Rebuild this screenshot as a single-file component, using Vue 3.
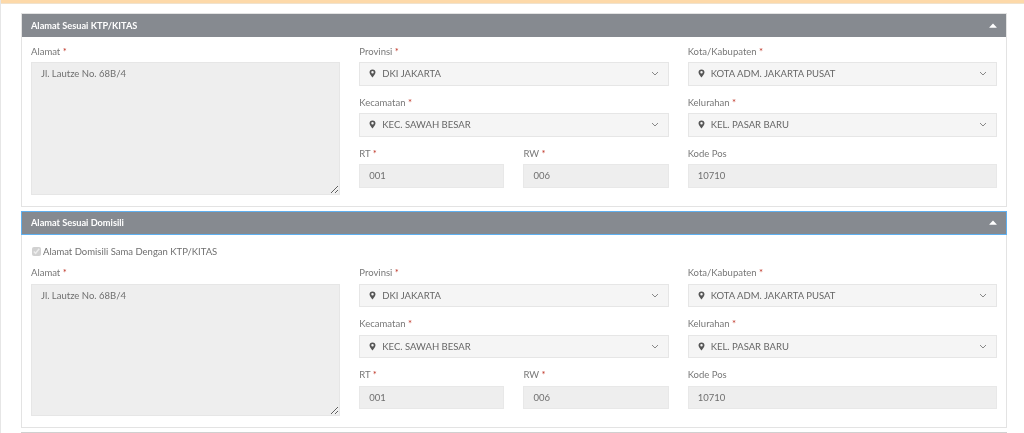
<script setup>
const panels = [
  { title: 'Alamat Sesuai KTP/KITAS', check: false },
  { title: 'Alamat Sesuai Domisili', check: true }
]
</script>

<template>
  <div class="page">
    <div class="topbar"></div>
    <div class="content">
      <section v-for="p in panels" :key="p.title" class="panel">
        <header class="head" :class="{ active: p.check }">
          <span>{{ p.title }}</span>
          <svg class="caret" width="8" height="5" viewBox="0 0 8 5"><path d="M4 .4 7.6 4.2Q7.8 4.8 7 4.8H1Q.2 4.8.4 4.2Z" fill="#fff"/></svg>
        </header>
        <div class="body" :class="{ hascheck: p.check }">
          <label v-if="p.check" class="check">
            <input type="checkbox" checked disabled />
            <span>Alamat Domisili Sama Dengan KTP/KITAS</span>
          </label>
          <div class="grid">
            <div class="field address">
              <div class="label">Alamat <i>*</i></div>
              <textarea class="area" disabled>Jl. Lautze No. 68B/4</textarea>
            </div>
            <div class="field" v-for="s in [['Provinsi','DKI JAKARTA'],['Kota/Kabupaten','KOTA ADM. JAKARTA PUSAT'],['Kecamatan','KEC. SAWAH BESAR'],['Kelurahan','KEL. PASAR BARU']]" :key="s[0]">
              <div class="label">{{ s[0] }} <i>*</i></div>
              <div class="select">
                <svg class="pin" width="7" height="9" viewBox="0 0 8 10"><path fill-rule="evenodd" d="M4 .3A3.4 3.4 0 0 0 .6 3.700C.6 5.900 4 9.700 4 9.700s3.400-3.800 3.400-6A3.400 3.400 0 0 0 4 .3Zm0 4.700a1.400 1.400 0 1 1 0-2.800a1.400 1.400 0 0 1 0 2.800Z" fill="#555"/></svg>
                <span class="val">{{ s[1] }}</span>
                <svg class="chev" width="8" height="5" viewBox="0 0 8 5"><path d="M1 1 4 4 7 1" fill="none" stroke="#888" stroke-width="1"/></svg>
              </div>
            </div>
            <div class="pair">
              <div class="field">
                <div class="label">RT <i>*</i></div>
                <input class="input" value="001" disabled />
              </div>
              <div class="field">
                <div class="label">RW <i>*</i></div>
                <input class="input" value="006" disabled />
              </div>
            </div>
            <div class="field">
              <div class="label">Kode Pos</div>
              <input class="input" value="10710" disabled />
            </div>
          </div>
        </div>
      </section>
      <div class="next"></div>
    </div>
  </div>
</template>

<style>
html, body { margin: 0; background: #fff; overflow: hidden; }
</style>

<style scoped>
.page {
  height: 433px;
  overflow: hidden;
  font-family: Lato, "Open Sans", sans-serif;
  font-size: 9.5px;
  color: #6f6f6f;
  border-left: 1px solid #e6e6e6;
  box-sizing: border-box;
  filter: blur(0.3px);
}
.topbar { height: 4px; background: #fdd9a9; border-bottom: 1px solid #f0e2cd; box-sizing: border-box; }
.content { padding: 9px 17px 0 20px; display: flex; flex-direction: column; gap: 4px; }
.panel { border: 1px solid #e3e3e3; background: #fff; }
.head {
  height: 23px;
  box-sizing: border-box;
  background: #868a90;
  color: #fff;
  font-weight: 700;
  font-size: 9.2px;
  padding: 0 9px;
  display: flex;
  align-items: center;
  justify-content: space-between;
}
.head.active { margin: -1px -1px 0; border: 1px solid #5fb0f0; height: 24px; padding-bottom: 2px; }
.caret { margin-right: 0; }
.body { padding: 7px 9px 11px; }
.body.hascheck { padding-top: 7px; }
.check { display: flex; align-items: center; gap: 1px; height: 18px; color: #6f6f6f; margin-bottom: 5px; }
.check input { width: 9px; height: 9px; margin: 0 1px 0 1px; accent-color: #c5c5c5; }
.grid {
  display: grid;
  grid-template-columns: repeat(3, minmax(0, 1fr));
  grid-template-rows: 42px 42px auto;
  column-gap: 19px;
  row-gap: 9px;
}
.address { grid-row: 1 / span 3; }
.label { height: 18px; line-height: 15px; color: #777; }
.label i { color: #c0392b; font-style: normal; }
.area {
  display: block;
  width: 100%;
  height: 133px;
  box-sizing: border-box;
  margin: 0;
  padding: 5px 9px;
  background: #eee;
  border: 1px solid #e6e6e6;
  color: #6f6f6f;
  font: inherit;
  outline: 0;
  border-radius: 0;
}
.hascheck .area { margin-top: 1px; height: 132px; }
.select {
  height: 23.5px;
  box-sizing: border-box;
  background: #f5f5f5;
  border: 1px solid #e6e6e6;
  display: flex;
  align-items: center;
  padding: 0 9px;
  color: #666;
}
.hascheck .select { margin-top: 1px; height: 23px; }
.pin { margin-right: 6px; flex: none; }
.val { flex: 1; }
.chev { flex: none; }
.pair { display: grid; grid-template-columns: 1fr 1fr; column-gap: 19px; }
.input {
  display: block;
  width: 100%;
  height: 23.5px;
  box-sizing: border-box;
  margin: 0;
  padding: 0 9px;
  background: #eee;
  border: 1px solid #e8e8e8;
  color: #6f6f6f;
  font: inherit;
  outline: 0;
  border-radius: 0;
}
.hascheck .input { margin-top: 1px; height: 23px; }
.next { border-top: 1px solid #d0d0d0; height: 10px; }
</style>
